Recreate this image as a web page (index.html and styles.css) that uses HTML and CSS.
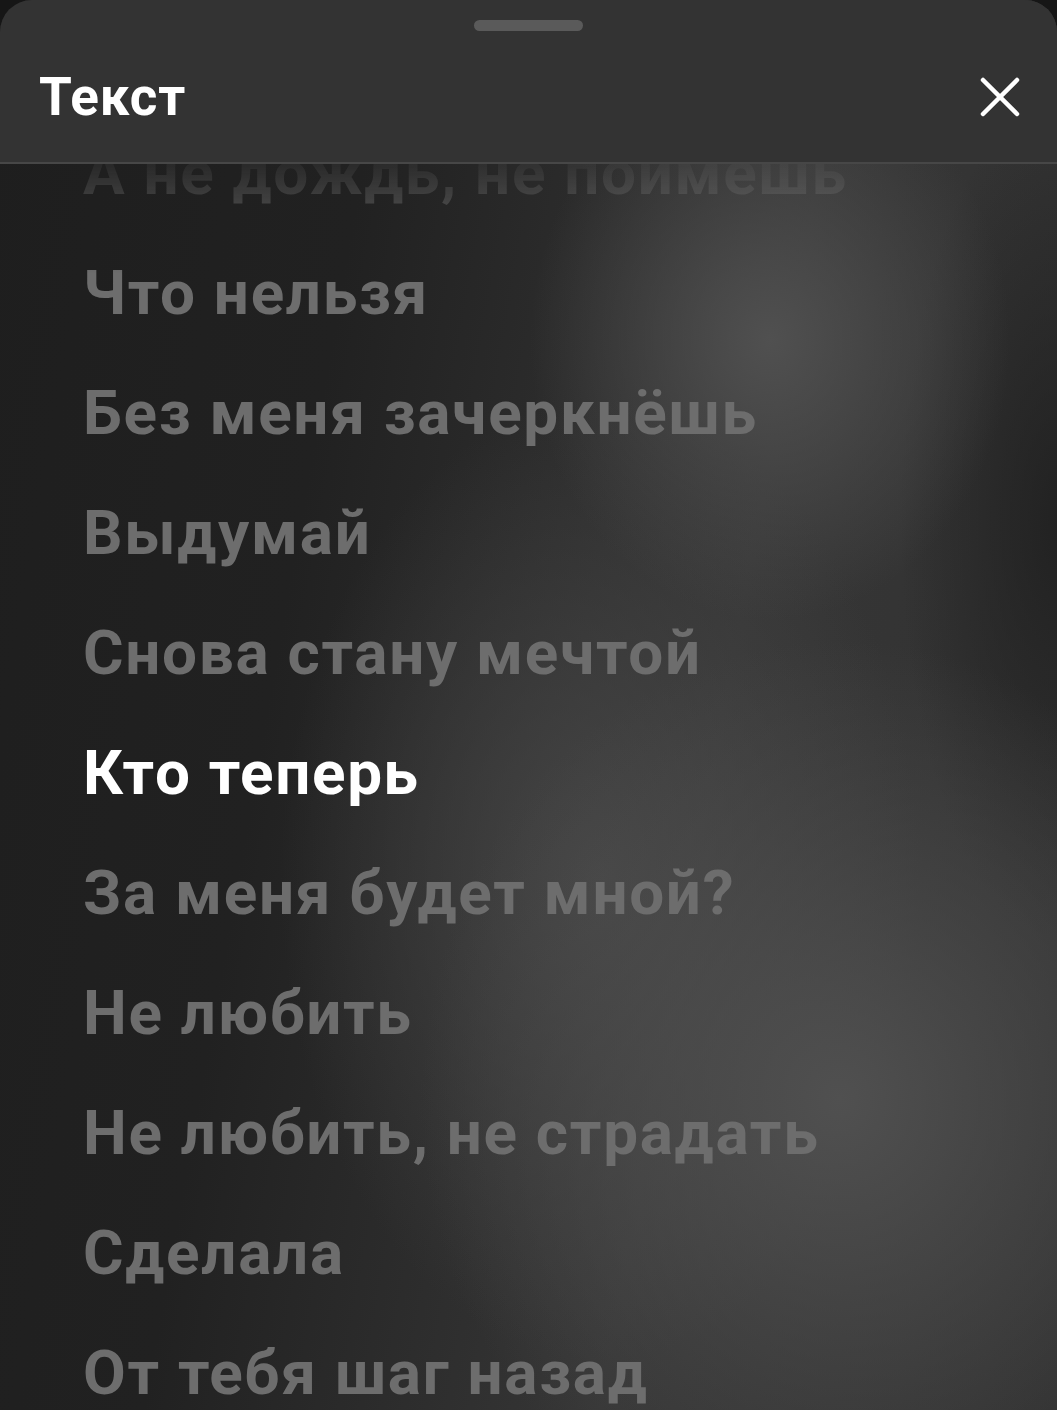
FILE: index.html
```html
<!DOCTYPE html>
<html lang="ru">
<head>
    <meta charset="UTF-8">
    <meta name="viewport" content="width=device-width, initial-scale=1.0">
    <title>Текст</title>
    <link rel="stylesheet" href="styles.css">
</head>
<body>
    <div class="sheet">
        <div class="sheet-header">
            <div class="handle"></div>
            <div class="title-row">
                <h1 class="title">Текст</h1>
                <button class="close-btn" aria-label="Закрыть">
                    <svg viewBox="0 0 40 40" width="40" height="40">
                        <path d="M3 3 L37 37 M37 3 L3 37" stroke="#fff" stroke-width="4.5" stroke-linecap="round" fill="none"/>
                    </svg>
                </button>
            </div>
        </div>

        <div class="lyrics">
            <div class="lyrics-list">
                <p class="line">А не дождь, не поймешь</p>
                <p class="line">Что нельзя</p>
                <p class="line">Без меня зачеркнёшь</p>
                <p class="line">Выдумай</p>
                <p class="line">Снова стану мечтой</p>
                <p class="line active">Кто теперь</p>
                <p class="line">За меня будет мной?</p>
                <p class="line">Не любить</p>
                <p class="line">Не любить, не страдать</p>
                <p class="line">Сделала</p>
                <p class="line">От тебя шаг назад</p>
                <p class="line">Не держи</p>
            </div>
        </div>
    </div>
</body>
</html>
```

FILE: styles.css
```css
html, body {
    margin: 0;
    height: 100%;
    background: #161616;
    overflow: hidden;
}

body {
    font-family: Roboto, 'Noto Sans', sans-serif;
}

/* Bottom sheet */
.sheet {
    height: 100%;
    display: flex;
    flex-direction: column;
    border-radius: 32px 32px 0 0;
    overflow: hidden;
    background-color: #242424;
    background-image:
        radial-gradient(ellipse 240px 280px at 770px 340px, rgba(80, 80, 80, 1), rgba(80, 80, 80, 0) 100%),
        radial-gradient(ellipse 420px 460px at 840px 1100px, rgba(80, 80, 80, 1), rgba(80, 80, 80, 0) 100%),
        radial-gradient(ellipse 320px 480px at 600px 880px, rgba(72, 72, 72, 0.9), rgba(72, 72, 72, 0) 100%),
        radial-gradient(ellipse 160px 420px at 1060px 520px, rgba(32, 32, 32, 0.9), rgba(32, 32, 32, 0) 100%),
        linear-gradient(100deg, #1e1e1e 0%, #212121 30%, #363636 65%, #303030 100%);
}

.sheet-header {
    flex: none;
    background: #333;
    border-bottom: 2px solid #474747;
    height: 164px;
    box-sizing: border-box;
    display: flex;
    flex-direction: column;
    align-items: center;
}

.handle {
    margin-top: 20px;
    width: 109px;
    height: 11px;
    border-radius: 6px;
    background: #5a5a5a;
}

.title-row {
    align-self: stretch;
    display: flex;
    align-items: center;
    justify-content: space-between;
    padding: 0 32px 0 39px;
    margin-top: 35px;
}

.title {
    margin: 0;
    font-size: 53px;
    font-weight: 700;
    line-height: 62px;
    color: #fff;
    letter-spacing: 0.8px;
}

.close-btn {
    background: none;
    border: none;
    padding: 0;
    width: 50px;
    height: 50px;
    display: flex;
    align-items: center;
    justify-content: center;
    cursor: pointer;
}

/* Lyrics, scrolled so the current line sits mid-sheet */
.lyrics {
    flex: 1;
    overflow: hidden;
    -webkit-mask-image: linear-gradient(to bottom, rgba(0, 0, 0, 0.12) 0, #000 110px);
    mask-image: linear-gradient(to bottom, rgba(0, 0, 0, 0.12) 0, #000 110px);
}

.lyrics-list {
    margin-top: -51px;
    padding: 0 83px;
}

.line {
    margin: 0;
    font-size: 62px;
    font-weight: 700;
    line-height: 120px;
    letter-spacing: 1.7px;
    color: #6d6d6d;
    white-space: nowrap;
}

.line.active {
    color: #fff;
}
```
